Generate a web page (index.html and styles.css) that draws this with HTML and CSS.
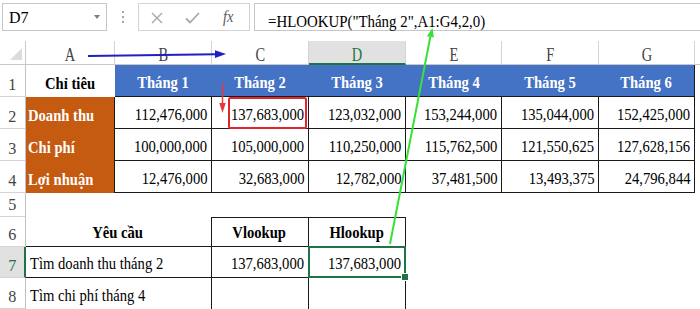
FILE: index.html
```html
<!DOCTYPE html>
<html lang="vi">
<head>
<meta charset="utf-8">
<title>HLOOKUP</title>
<link rel="stylesheet" href="styles.css">
</head>
<body>
<div class="app">
  <div class="toolbar">
    <div class="namebox"><span class="nb">D7</span><span class="caret"></span></div>
    <div class="grip"><i></i><i></i><i></i></div>
    <div class="fnbtns">
      <svg class="ic-x" width="12" height="12" viewBox="0 0 12 12"><path d="M1 1 L11 11 M11 1 L1 11" stroke="#a8a8a8" stroke-width="1.4" fill="none"/></svg>
      <svg class="ic-ok" width="15" height="12" viewBox="0 0 15 12"><path d="M1 6.5 L5 10.5 L14 1" stroke="#a8a8a8" stroke-width="1.8" fill="none"/></svg>
      <span class="fx">fx</span>
    </div>
    <div class="formula"><span class="ft">=HLOOKUP("Tháng 2",A1:G4,2,0)</span></div>
  </div>

  <div class="sheet">
    <div class="corner"></div>
    <div class="ch"><span class="cl">A</span></div>
    <div class="ch"><span class="cl">B</span></div>
    <div class="ch"><span class="cl">C</span></div>
    <div class="ch sel"><span class="cl">D</span></div>
    <div class="ch"><span class="cl">E</span></div>
    <div class="ch"><span class="cl">F</span></div>
    <div class="ch"><span class="cl">G</span></div>
    <div class="ch last"></div>

    <div class="rh"><span class="rn">1</span></div>
    <div class="c ctr bold"><span class="t tc">Chỉ tiêu</span></div>
    <div class="c hd"><span class="t tc">Tháng 1</span></div>
    <div class="c hd"><span class="t tc">Tháng 2</span></div>
    <div class="c hd"><span class="t tc">Tháng 3</span></div>
    <div class="c hd"><span class="t tc">Tháng 4</span></div>
    <div class="c hd"><span class="t tc">Tháng 5</span></div>
    <div class="c hd end"><span class="t tc">Tháng 6</span></div>
    <div class="c"></div>

    <div class="rh"><span class="rn">2</span></div>
    <div class="c org"><span class="t tl">Doanh thu</span></div>
    <div class="c num"><span class="t tr">112,476,000</span></div>
    <div class="c num"><span class="t tr">137,683,000</span></div>
    <div class="c num"><span class="t tr">123,032,000</span></div>
    <div class="c num"><span class="t tr">153,244,000</span></div>
    <div class="c num"><span class="t tr">135,044,000</span></div>
    <div class="c num"><span class="t tr">152,425,000</span></div>
    <div class="c"></div>

    <div class="rh"><span class="rn">3</span></div>
    <div class="c org"><span class="t tl">Chi phí</span></div>
    <div class="c num"><span class="t tr">100,000,000</span></div>
    <div class="c num"><span class="t tr">105,000,000</span></div>
    <div class="c num"><span class="t tr">110,250,000</span></div>
    <div class="c num"><span class="t tr">115,762,500</span></div>
    <div class="c num"><span class="t tr">121,550,625</span></div>
    <div class="c num"><span class="t tr">127,628,156</span></div>
    <div class="c"></div>

    <div class="rh"><span class="rn">4</span></div>
    <div class="c org"><span class="t tl">Lợi nhuận</span></div>
    <div class="c num"><span class="t tr">12,476,000</span></div>
    <div class="c num"><span class="t tr">32,683,000</span></div>
    <div class="c num"><span class="t tr">12,782,000</span></div>
    <div class="c num"><span class="t tr">37,481,500</span></div>
    <div class="c num"><span class="t tr">13,493,375</span></div>
    <div class="c num"><span class="t tr">24,796,844</span></div>
    <div class="c"></div>

    <div class="rh"><span class="rn">5</span></div>
    <div class="c rest"></div>

    <div class="rh"><span class="rn">6</span></div>
    <div class="c m2 ctr bold bx"><span class="t tc">Yêu cầu</span></div>
    <div class="c ctr bold bx bt"><span class="t tc">Vlookup</span></div>
    <div class="c ctr bold bx bt"><span class="t tc">Hlookup</span></div>
    <div class="c rest4"></div>

    <div class="rh sel"><span class="rn">7</span></div>
    <div class="c m2 bx r7"><span class="t tl">Tìm doanh thu tháng 2</span></div>
    <div class="c num r7"><span class="t tr">137,683,000</span></div>
    <div class="c num r7 active"><span class="t tr">137,683,000</span></div>
    <div class="c rest4"></div>

    <div class="rh"><span class="rn">8</span></div>
    <div class="c m2 br"><span class="t tl">Tìm chi phí tháng 4</span></div>
    <div class="c br"></div>
    <div class="c br"></div>
    <div class="c rest4"></div>
  </div>

  <svg class="overlay" width="700" height="309" viewBox="0 0 700 309">
    <line x1="88" y1="56" x2="216" y2="54.2" stroke="#1f1fc4" stroke-width="2"/>
    <polygon points="226,54 215,50.3 215,57.9" fill="#1f1fc4"/>
    <line x1="222.5" y1="83" x2="222.5" y2="104" stroke="#e53838" stroke-width="1.5"/>
    <polygon points="222.5,113 219.3,103 225.7,103" fill="#e53838"/>
    <rect x="229" y="98" width="77" height="30" rx="1.5" fill="none" stroke="#e0262c" stroke-width="2"/>
    <line x1="390" y1="244" x2="430.4" y2="36.5" stroke="#38e038" stroke-width="2"/>
    <polygon points="432.5,28 433.9,37.6 426.8,36.2" fill="#38e038"/>
  </svg>
</div>
</body>
</html>
```

FILE: styles.css
```css
* {
  box-sizing: border-box;
  margin: 0;
  padding: 0;
}

body {
  margin: 0;
  background: #ffffff;
  font-family: "Liberation Serif", "Times New Roman", serif;
  color: #000000;
  overflow: hidden;
}

.app {
  position: relative;
  width: 700px;
  height: 309px;
  overflow: hidden;
  font-family: "Liberation Serif", "Times New Roman", serif;
}

/* ---------- formula toolbar ---------- */
.toolbar {
  display: flex;
  align-items: flex-start;
  height: 41px;
  padding: 3px 0 0 2px;
}

.namebox {
  width: 105px;
  height: 28px;
  border: 1px solid #c6c6c6;
  display: flex;
  align-items: center;
  justify-content: space-between;
  padding: 0 6px 0 6px;
}

.nb {
  font-size: 16px;
  line-height: 18px;
  padding-top: 1px;
}

.caret {
  width: 0;
  height: 0;
  border-left: 3.5px solid transparent;
  border-right: 3.5px solid transparent;
  border-top: 4px solid #7f7f7f;
}

.grip {
  width: 31px;
  height: 28px;
  display: flex;
  flex-direction: column;
  align-items: center;
  justify-content: center;
  gap: 3px;
}

.grip i {
  display: block;
  width: 2px;
  height: 2px;
  background: #a6a6a6;
}

.fnbtns {
  width: 112px;
  height: 28px;
  border: 1px solid #d4d4d4;
  display: flex;
  align-items: center;
  padding-left: 12px;
}

.ic-x {
  margin-top: 1px;
}

.ic-ok {
  margin-left: 22px;
  margin-top: 1px;
}

.fx {
  margin-left: 22px;
  font-family: "Liberation Serif", "Times New Roman", serif;
  font-style: italic;
  font-size: 17px;
  color: #5a5a5a;
  display: inline-block;
  transform: scaleX(0.85);
}

.formula {
  flex: 1;
  height: 28px;
  margin-left: 4px;
  border: 1px solid #c6c6c6;
  border-right: none;
  display: flex;
  align-items: flex-end;
  padding-left: 13px;
}

.ft {
  display: inline-block;
  font-family: "Liberation Serif", "Times New Roman", serif;
  font-size: 17.5px;
  line-height: 18px;
  white-space: nowrap;
  transform: scaleX(0.85);
  transform-origin: left center;
}

/* ---------- sheet grid ---------- */
.sheet {
  display: grid;
  grid-template-columns: 26px 89px 97px 97px 97px 96px 97px 96px 1fr;
  grid-template-rows: 24px 32px 32px 32px 32px 24px 30px 31px 31px;
  font-family: "Liberation Serif", "Times New Roman", serif;
}

.corner {
  position: relative;
  border-right: 1px solid #c8c8c8;
  border-bottom: 1px solid #c8c8c8;
}

.corner::after {
  content: "";
  position: absolute;
  right: 3px;
  bottom: 4px;
  width: 0;
  height: 0;
  border-left: 12px solid transparent;
  border-bottom: 12px solid #dcdcdc;
}

.ch {
  display: flex;
  align-items: flex-end;
  justify-content: center;
  border-right: 1px solid #d4d4d4;
  border-bottom: 1px solid #c8c8c8;
  color: #444444;
}

.ch.last {
  border-right: none;
}

.ch.sel {
  background: #e1e1e1;
  color: #217346;
  border-bottom: 2px solid #217346;
}

.cl {
  display: inline-block;
  font-family: "Liberation Serif", "Times New Roman", serif;
  font-size: 19px;
  line-height: 19px;
  transform: scaleX(0.76);
}

.ch.sel .cl {
  margin-bottom: -1px;
}

.rh {
  display: flex;
  align-items: flex-end;
  justify-content: center;
  border-right: 1px solid #c0c0c0;
  border-bottom: 1px solid #d4d4d4;
  color: #444444;
  padding-bottom: 3px;
}

.rh.sel {
  background: #e1e1e1;
  color: #217346;
  border-right: 2px solid #217346;
}

.rn {
  display: inline-block;
  font-family: "Liberation Serif", "Times New Roman", serif;
  font-size: 17px;
  line-height: 16px;
  transform: scaleX(0.95);
}

/* cells */
.c {
  display: flex;
  align-items: flex-end;
  padding: 0 4px 5px 3px;
  font-family: "Liberation Serif", "Times New Roman", serif;
  font-size: 17px;
  line-height: 17px;
  white-space: nowrap;
  min-width: 0;
}

.t {
  display: inline-block;
  font-family: "Liberation Serif", "Times New Roman", serif;
  transform: scaleX(0.86);
}

.tl {
  transform-origin: left center;
}

.tr {
  transform-origin: right center;
}

.tc {
  transform-origin: center center;
}

.ctr {
  justify-content: center;
}

.bold {
  font-weight: bold;
}

.hd {
  background: #4472c4;
  color: #ffffff;
  font-weight: bold;
  justify-content: center;
  border-bottom: 1px solid #1a1a1a;
}

.hd.end {
  border-right: 1px solid #1a1a1a;
}

.org {
  background: #c55a11;
  color: #ffffff;
  font-weight: bold;
  border-right: 1px solid #1a1a1a;
  padding-left: 2px;
}

.num {
  justify-content: flex-end;
  border-right: 1px solid #1a1a1a;
  border-bottom: 1px solid #1a1a1a;
}

.rest {
  grid-column: span 8;
}

.rest4 {
  grid-column: span 4;
}

.m2 {
  grid-column: span 2;
}

.bx {
  border-right: 1px solid #1a1a1a;
  border-bottom: 1px solid #1a1a1a;
}

.bt {
  border-top: 1px solid #1a1a1a;
}

.br {
  border-right: 1px solid #1a1a1a;
}

.r7 {
  padding-bottom: 5px;
}

.m2.r7 {
  padding-left: 4px;
}

.m2.br {
  padding-left: 4px;
}

/* active cell (selection overlay) */
.active {
  position: relative;
}

.active::after {
  content: "";
  position: absolute;
  left: -1px;
  top: -1px;
  right: -1px;
  bottom: -1px;
  border: 2px solid #217346;
}

.active::before {
  content: "";
  position: absolute;
  right: -4px;
  bottom: -4px;
  width: 6px;
  height: 6px;
  background: #217346;
  border: 1px solid #ffffff;
  z-index: 2;
}

.overlay {
  position: absolute;
  left: 0;
  top: 0;
  pointer-events: none;
}
```
